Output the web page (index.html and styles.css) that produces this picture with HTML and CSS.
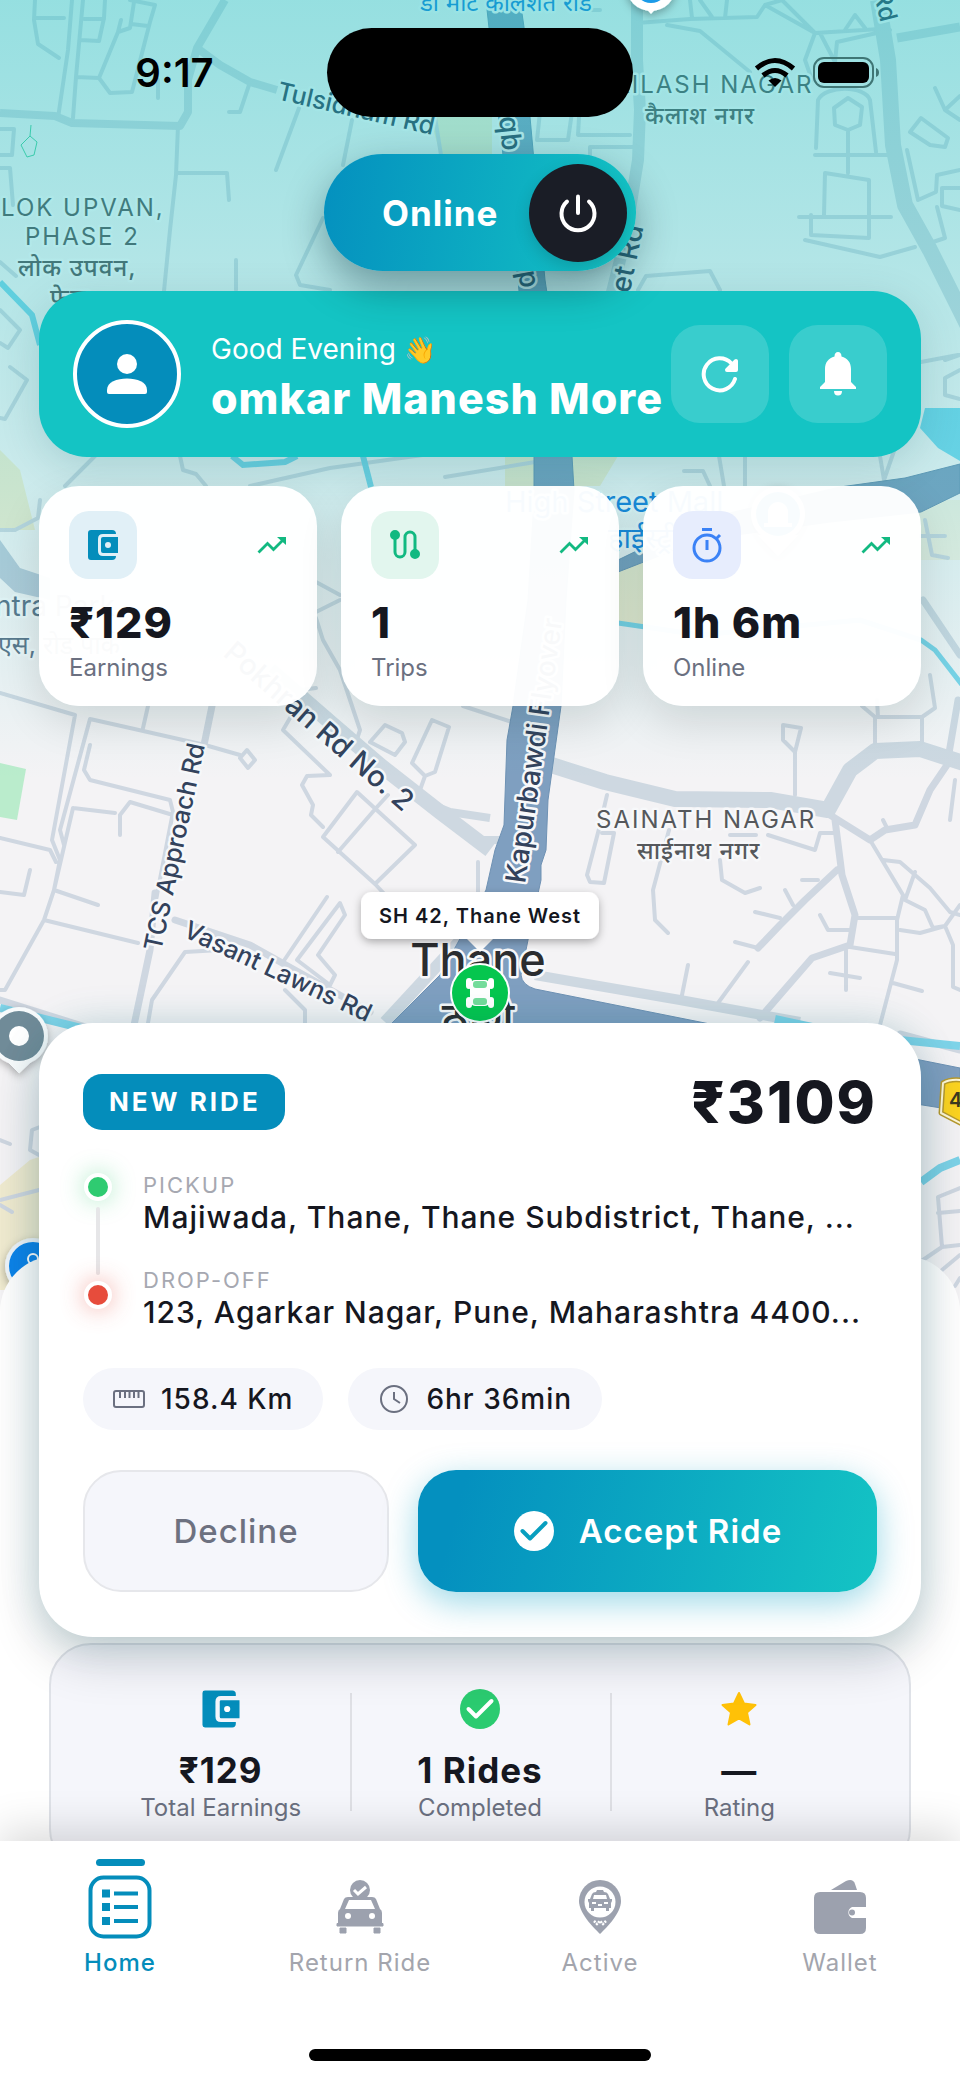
FILE: index.html
```html
<!DOCTYPE html>
<html lang="en">
<head>
  <meta charset="UTF-8">
  <meta name="viewport" content="width=device-width, initial-scale=1.0">
  <title>Driver Home</title>
  <link rel="stylesheet" href="styles.css">
</head>
<body>
  <div class="screen">

    <!-- Map -->
    <svg class="map" viewBox="0 0 960 1400" preserveAspectRatio="xMidYMin slice" role="img" aria-label="Map of Thane West">
      <defs>
        <linearGradient id="tint" x1="0" y1="0" x2="0" y2="1">
          <stop offset="0" stop-color="#14c4c4" stop-opacity="0.42"/>
          <stop offset="0.4" stop-color="#14c4c4" stop-opacity="0.27"/>
          <stop offset="0.62" stop-color="#14c4c4" stop-opacity="0.18"/>
          <stop offset="1" stop-color="#14c4c4" stop-opacity="0"/>
        </linearGradient>
        <filter id="pinShadow" x="-30%" y="-30%" width="160%" height="170%">
          <feDropShadow dx="0" dy="3" stdDeviation="4" flood-opacity="0.3"/>
        </filter>
      </defs>
      <rect width="960" height="1400" fill="#f4f3f5"/>

      <!-- areas -->
      <path class="park" d="M0 763 26 769 17 820 0 817Z"/>
      <path class="tan" d="M430 117 492 117 492 154 440 154ZM505 456H618L600 486H505ZM610 565 660 545 660 625H610ZM0 1185 30 1160 60 1150V1290H0ZM0 450 20 470 35 530H0Z"/>
      <path class="tan" d="M900 500H960V560H900Z" opacity="0.5"/>
      <path class="water" d="M925 408H960V461L938 448 920 428Z"/>
      <path d="M0 540 20 568 50 578V600L15 592 0 578Z" fill="#bccbda"/>

      <!-- lanes -->
      <g class="lane">
        <path d="M35 0 34 20 38 44 59 58M34 18H64M72 0 68 50 58 118M83 0 76 77 73 118M105 0 104 18 99 41 80 40M84 19H104M130 0 155 5 150 22 132 92 110 93 99 78 76 77M99 78 118 32 121 20M118 32 130 28 134 2M131 24 148 26M158 80V98"/>
        <path d="M178 126 176 175 170 230 164 291M176 173H227L229 200M250 82 240 112H229M299 108 276 170M352 120 343 165M435 117 441 155M323 218 296 275 300 285 330 290M236 260V290M0 129H14L12 155H0M0 168H10L13 205M0 262 16 276"/>
        <path d="M637 23 690 19 757 17 765 5 782 0M690 0 692 18M727 0 725 18M700 0 712 17M765 5 815 33 880 29M815 33 800 18 782 0M815 33 805 60 812 80M820 33 835 62 837 42 890 30M845 30 855 15 865 28M667 25 700 31 750 72"/>
        <path d="M816 148 818 100C825 85 865 85 870 100L876 152M815 155H888M848 155V130L835 125 834 108 848 98 862 107 860 125 848 130M848 155V173M825 173 869 180V238L811 235V215M825 173 824 215M799 217H891M805 240 880 257 915 247M910 132 921 118 948 138 945 147 930 145ZM935 88 945 110 960 96M945 110 960 120M907 150 918 200 936 192 937 175 960 170M937 207 945 238 930 243M960 188H942V206L960 210"/>
        <path d="M638 290 646 276 710 271 720 290M540 112 537 140H568L572 112M580 100 578 135H630M590 147H635M590 147V165M600 10H575M0 310 20 330 8 348 0 343M10 367 27 380 5 419 0 418"/>
        <path d="M65 486 95 456M180 456 183 470 196 474 206 486M250 486 330 468 530 440M445 477 535 462M0 530 15 530 38 518 40 500M945 360 960 355M921 362 958 355M960 370 945 378V395L960 399M719 456 724 486M745 456V486M684 471H703L710 486M880 456 884 480 895 448M921 536H945M925 520 932 555 948 558M316 582 340 595M316 612 340 600M316 618 323 640 340 670 360 730 355 745M300 690 316 688"/>
        <path d="M0 693 75 715 52 840 60 860 54 890 44 920 5 990H0M148 706 143 728M90 719 60 830 64 845M90 719 130 728 205 745 240 755M247 750 255 760 248 768 240 758ZM90 745 84 770 90 780 170 800 173 812 155 905M73 808 115 813M120 835V815L130 802 173 815M73 808 54 890 98 905M0 838 50 850 56 862M30 870 24 895 0 892M44 920 138 943M148 1023 152 1000 185 952 220 950M285 990 305 1010V1023"/>
        <path d="M290 718 283 730 330 775 307 776 302 785 313 805 311 815 323 827M357 792 415 845 375 884 323 837ZM377 807 338 852M375 884 390 900M377 807 388 795M370 742 385 725 402 733 405 742 395 755ZM432 720 449 727 435 772 425 776 412 763ZM425 776 420 790M340 903 345 915 318 955 335 975 330 985 297 960ZM327 897 283 962M478 862V892M463 706 512 722"/>
        <path d="M795 795V752L783 740V725L801 728 795 752M875 750V717H922V745M862 706 875 717M877 700 878 717M922 717 935 708 930 675M607 795 600 825 587 875 590 882 604 883 614 833H602M669 830 653 890 655 920 668 933M720 860 722 880 745 893 760 888M730 835H756M768 835 815 850 820 833H835"/>
        <path d="M802 880H818M785 890 793 905M755 912 780 918M758 948 735 942M870 840 903 895 897 920V960L880 1025M855 918H897M850 947 895 954M883 860 900 862 930 888 950 912 960 915M915 872 905 900 925 910 933 928 945 926 960 905M900 930 920 933 945 926 953 945V987L960 990M846 950V990M830 973 860 978M820 915 828 930H850M893 983 922 991M688 965 682 995M748 962 718 1003M955 780 950 820M883 820 888 830"/>
        <path d="M0 1140 10 1144M45 1125 32 1130 30 1150 39 1155M0 1200 39 1190M0 1205 12 1212M960 1188 938 1197 942 1247 960 1245M938 1213 960 1211M942 1247 920 1262M960 1255 942 1270M960 1278 955 1286"/>
      </g>
      <g class="lane wide">
        <path d="M212 706 204 745M155 893 150 950 133 1030M175 920 250 945 370 1012M830 815 870 840 885 830 915 825 930 790 947 765 958 700M835 820 842 875 855 915 850 945 812 958 760 1018M837 870 805 900 780 925 758 948M923 600 960 655"/>
        <path d="M0 1000 95 1030M900 1034 960 1050"/>
      </g>

      <!-- roads -->
      <g class="road">
        <path d="M0 113 55 116 72 123 180 126 188 112V80L197 48 225 0M197 48 220 65 250 82 277 90" stroke-width="8"/>
        <path d="M637 0V60L640 110 638 160 625 240 610 300" stroke-width="12"/>
        <path d="M897 38 960 27" stroke-width="9"/>
        <path d="M878 0 888 60 893 145 905 205 930 250 960 310 985 360" stroke-width="16"/>
        <path d="M270 670 330 722 380 765 440 812 490 850" stroke-width="15"/>
        <path d="M420 800 450 812 490 818M535 840 480 840" stroke-width="8"/>
        <path d="M545 763 605 782 675 799 770 800 828 810 850 770 875 751 920 749 970 765" stroke-width="16"/>
        <path d="M535 975 680 1000 800 1022" stroke-width="10"/>
        <path d="M385 1022 470 930" stroke-width="12"/>
      </g>

      <!-- highway -->
      <g class="highway">
        <path d="M486 0H520L524 27 530 117 533 150 545 280 572 456 574 490 566 600 561 706 548 800 546 850 541 865V880L530 930 521 975Q522 985 535 989L710 1024V1060H360L392 1023 440 975 462 935 486 890 495 850 504 825 507 740 513 706 528 600 534 500V456L518 280 500 130Z"/>
        <path d="M960 464 905 478 840 487 700 520 618 560V572L700 540 830 522 921 512 960 493Z"/>
        <path d="M910 1058 960 1068V1111L910 1103Z"/>
      </g>

      <g class="canal">
        <path d="M0 282 32 315 40 345" stroke-width="6"/>
        <path d="M232 456 243 465 285 462 297 456M363 456 371 487" stroke-width="6"/>
        <path d="M618 623 700 635 860 620 921 640 935 650 970 695" stroke-width="5"/>
        <path d="M0 1008 85 1029M775 1019 812 1027M890 1039 960 1046M921 1182 940 1168 960 1160" stroke-width="8"/>
      </g>
      <path d="M31 125 30 136 21 145 27 157 34 155 37 142 30 136" fill="none" stroke="#4fcf9f"/>

      <!-- labels on the map -->
      <g class="place">
        <text x="1" y="216">LOK UPVAN,</text>
        <text x="25" y="245">PHASE 2</text>
        <text class="local" x="18" y="276">लोक उपवन,</text>
        <text class="local" x="50" y="306">फेज</text>
        <text x="595" y="93">KAILASH NAGAR</text>
        <text class="local" x="645" y="124">कैलाश नगर</text>
        <text x="596" y="828">SAINATH NAGAR</text>
        <text class="local" x="637" y="859">साईनाथ नगर</text>
      </g>
      <g class="street">
        <text transform="translate(276 99) rotate(13)" font-size="25">Tulsidham Rd</text>
        <text class="large" transform="translate(222 655) rotate(41)">Pokhran Rd No. 2</text>
        <text class="small" transform="translate(161 952) rotate(-78)">TCS Approach Rd</text>
        <text class="small" transform="translate(182 936) rotate(25)">Vasant Lawns Rd</text>
        <text transform="translate(525 884) rotate(-82)">Kapurbawdi Flyover</text>
        <text transform="translate(499 117) rotate(84)">qb</text>
        <text transform="translate(518 272) rotate(80)">p</text>
        <text transform="translate(626 310) rotate(-78)">eet Rd</text>
        <text class="small" transform="translate(866 -36) rotate(76)">ta Rd</text>
      </g>
      <g class="poi">
        <text x="420" y="11">डॉ मोटे कॉलेशत रोड</text>
        <text class="large" x="505" y="512">High Street Mall</text>
        <text class="large" x="608" y="548">हाईस्ट्रीट</text>
      </g>
      <g class="street soft">
        <text x="-5" y="616">ntra Park</text>
        <text class="small" x="-2" y="654">एस, रोड पार्क</text>
      </g>
      <rect width="960" height="780" fill="url(#tint)"/>

      <!-- pins -->
      <g filter="url(#pinShadow)">
        <path d="M651 14 633 -6H669Z" fill="#fff"/>
        <circle cx="651" cy="-14" r="25" fill="#fff"/>
        <circle cx="651" cy="-14" r="17" fill="#1b9be8"/>
        <path d="M778 556 758 535H798Z" fill="#fff"/>
        <circle cx="778" cy="514" r="27" fill="#fff"/>
        <circle cx="778" cy="514" r="22" fill="#2aa7c9"/>
        <path d="M19 1073 0 1054 -8 1035H47L39 1054Z" fill="#f7fafb" stroke="#f7fafb" stroke-linejoin="round"/>
        <circle cx="19" cy="1036" r="29" fill="#f7fafb"/>
        <circle cx="19" cy="1036" r="25" fill="#6f8b98"/>
        <circle cx="19" cy="1036" r="10" fill="#fff"/>
        <circle cx="33" cy="1266" r="28" fill="#eef4fa"/>
        <circle cx="33" cy="1266" r="24" fill="#0a84ea"/>
      </g>
      <path d="M768 523V512A10 10 0 0 1 788 512V523H792V527H764V523Z" fill="#fff"/>
      <circle cx="33" cy="1259" r="5" fill="none" stroke="#fff" stroke-width="2"/>
      <path d="M943 1083Q950 1079 960 1080H990V1124H962L941 1113Z" fill="#fcd421" stroke="#b79a2f" stroke-width="5" stroke-linejoin="round"/>
      <path d="M943 1083Q950 1079 960 1080H990V1124H962L941 1113Z" fill="none" stroke="#fff8d8" stroke-width="2" stroke-linejoin="round"/>
      <text x="949" y="1107" class="shield">42</text>

      <!-- current position -->
      <g class="city">
        <text x="478" y="976" text-anchor="middle">Thane</text>
        <text x="478" y="1034" text-anchor="middle">ठाणे</text>
      </g>
      <path d="M466 938H494L480 952Z" fill="#fff"/>
      <rect x="361" y="892" width="238" height="47" rx="11" fill="#fff" filter="url(#pinShadow)"/>
      <text x="480" y="923" text-anchor="middle" class="bubble">SH 42, Thane West</text>
      <circle cx="480" cy="993" r="30" fill="#fff"/>
      <circle cx="480" cy="993" r="28" fill="#05c64e"/>
      <rect x="470" y="980" width="20" height="26" rx="5" fill="#fff"/>
      <rect x="473" y="981" width="14" height="7" rx="3" fill="#74dc9b"/>
      <rect x="473" y="998" width="14" height="7" rx="3" fill="#74dc9b"/>
      <path d="M469 981V986M491 981V986M469 1000V1005M491 1000V1005" stroke="#fff" stroke-width="6" stroke-linecap="round"/>
    </svg>

    <!-- Status bar -->
    <div class="status-bar">
      <time class="clock">9:17</time>
      <div class="island"></div>
      <div class="status-icons">
        <svg width="42" height="32" viewBox="0 0 42 32" fill="none" stroke="#000" stroke-width="5">
          <path d="M2.500 11.500Q21 -4.500 39.500 11.500"/>
          <path d="M9 18.500Q21 8.500 33 18.500"/>
          <path d="M21 30 14.500 23.500Q21 18.500 27.500 23.500Z" fill="#000" stroke="none"/>
        </svg>
        <svg width="68" height="32" viewBox="0 0 68 32">
          <rect x="1" y="1" width="59" height="29" rx="10" fill="none" stroke="#3f7675" stroke-width="2"/>
          <rect x="5" y="5" width="51" height="21" rx="6" fill="#000"/>
          <path d="M63 11Q66 12 66 15.500Q66 19 63 20Z" fill="#3f7675"/>
        </svg>
      </div>
    </div>

    <button class="toggle" type="button" aria-pressed="true">
      <span class="toggle-label">Online</span>
      <span class="knob">
        <svg width="40" height="40" viewBox="0 0 40 40" fill="none" stroke="#fff" stroke-width="4" stroke-linecap="round">
          <path d="M20 3.500V20"/>
          <path d="M9 8.500A16.500 16.500 0 1 0 31 8.500"/>
        </svg>
      </span>
    </button>

    <!-- Greeting -->
    <header class="profile">
      <div class="avatar">
        <svg width="42" height="42" viewBox="0 0 42 42" fill="#fff">
          <circle cx="21" cy="11" r="10"/>
          <path d="M1 37C1 29 11 25.500 21 25.500S41 29 41 37V39Q41 41 39 41H3Q1 41 1 39Z"/>
        </svg>
      </div>
      <div class="greeting">
        <p>Good Evening <span class="wave">👋</span></p>
        <h1>omkar Manesh More</h1>
      </div>
      <div class="profile-actions">
        <button type="button" aria-label="Refresh">
          <svg width="40" height="40" viewBox="0 0 40 40" fill="none" stroke="#fff" stroke-width="4" stroke-linecap="round">
            <path d="M35 25A16 16 0 1 1 31.500 9.500"/>
            <path d="M36 7V16H27Z" fill="#fff" stroke-linejoin="round"/>
          </svg>
        </button>
        <button type="button" aria-label="Notifications">
          <svg width="40" height="46" viewBox="0 0 40 46" fill="#fff">
            <path d="M20 1C17.800 1 16.500 2.500 16.500 5.500C10.500 7 7 11.500 7 18V31L2 36V38H38V36L33 31V18C33 11.500 29.500 7 23.500 5.500C23.500 2.500 22.200 1 20 1Z"/>
            <path d="M16 40H24Q24 44.500 20 44.500T16 40Z"/>
          </svg>
        </button>
      </div>
    </header>

    <!-- Today stats -->
    <section class="stats">
      <article class="stat">
        <div class="stat-top">
          <span class="stat-icon blue">
            <svg width="34" height="34" viewBox="0 0 34 34">
              <path d="M5 2H26Q30 2 30 6H17Q12 6 12 11V23Q12 28 17 28H30Q30 32 26 32H5Q2 32 2 29V5Q2 2 5 2Z" fill="#048dbb"/>
              <path d="M17 9H32V25H17Q15 25 15 23V11Q15 9 17 9Z" fill="#048dbb"/>
              <circle cx="22" cy="17" r="3" fill="#e1f0f7"/>
            </svg>
          </span>
          <svg class="trend" width="30" height="18" viewBox="0 0 30 18"><path d="M1.500 16.500 10.500 7.500 16.500 13.500 26 4" fill="none" stroke="#12b981" stroke-width="2.800"/><path d="M20 1H29V9Z" fill="#12b981"/></svg>
        </div>
        <strong>₹129</strong>
        <span class="stat-label">Earnings</span>
      </article>
      <article class="stat">
        <div class="stat-top">
          <span class="stat-icon green">
            <svg width="34" height="34" viewBox="0 0 34 34" fill="none" stroke="#12b981" stroke-width="3">
              <path d="M7 7V24A5 5 0 0 0 17 24V9A5 5 0 0 1 27 9V26"/>
              <circle cx="7" cy="7" r="3.500" fill="#12b981"/>
              <circle cx="27" cy="26" r="3.500" fill="#12b981"/>
            </svg>
          </span>
          <svg class="trend" width="30" height="18" viewBox="0 0 30 18"><path d="M1.500 16.500 10.500 7.500 16.500 13.500 26 4" fill="none" stroke="#12b981" stroke-width="2.800"/><path d="M20 1H29V9Z" fill="#12b981"/></svg>
        </div>
        <strong>1</strong>
        <span class="stat-label">Trips</span>
      </article>
      <article class="stat">
        <div class="stat-top">
          <span class="stat-icon indigo">
            <svg width="34" height="36" viewBox="0 0 34 36" fill="none" stroke="#3b82f6" stroke-width="3">
              <path d="M12 2.500H22"/>
              <circle cx="17" cy="21" r="13"/>
              <path d="M17 13V23M26 12 30 8"/>
            </svg>
          </span>
          <svg class="trend" width="30" height="18" viewBox="0 0 30 18"><path d="M1.500 16.500 10.500 7.500 16.500 13.500 26 4" fill="none" stroke="#12b981" stroke-width="2.800"/><path d="M20 1H29V9Z" fill="#12b981"/></svg>
        </div>
        <strong>1h 6m</strong>
        <span class="stat-label">Online</span>
      </article>
    </section>

    <!-- Ride request over the bottom sheet -->
    <div class="dock">
      <div class="sheet"></div>

      <section class="ride">
        <div class="ride-head">
          <span class="badge">NEW RIDE</span>
          <strong class="fare">₹3109</strong>
        </div>
        <div class="route">
          <div class="route-line">
            <i class="dot pickup"></i>
            <i class="bar"></i>
            <i class="dot drop"></i>
          </div>
          <dl>
            <div>
              <dt>PICKUP</dt>
              <dd>Majiwada, Thane, Thane Subdistrict, Thane, ...</dd>
            </div>
            <div>
              <dt>DROP-OFF</dt>
              <dd>123, Agarkar Nagar, Pune, Maharashtra 4400...</dd>
            </div>
          </dl>
        </div>
        <div class="chips">
          <span class="chip">
            <svg width="32" height="32" viewBox="0 0 32 32" fill="none" stroke="#6b7080" stroke-width="2">
              <rect x="1" y="8" width="30" height="16" rx="2"/>
              <path d="M7 8V15M12 8V15M16.500 8V15M21 8V15M25.500 8V15"/>
            </svg>
            158.4 Km
          </span>
          <span class="chip">
            <svg width="32" height="32" viewBox="0 0 32 32" fill="none" stroke="#6b7080" stroke-width="2">
              <circle cx="16" cy="16" r="13"/>
              <path d="M16 9V16L22 20"/>
            </svg>
            6hr 36min
          </span>
        </div>
        <div class="ride-actions">
          <button class="decline" type="button">Decline</button>
          <button class="accept" type="button">
            <svg width="42" height="42" viewBox="0 0 42 42" fill="none">
              <circle cx="21" cy="21" r="20" fill="#fff"/>
              <path d="M9.500 21 17 28.500 32.500 13" stroke="#089fbf" stroke-width="4" stroke-linecap="round" stroke-linejoin="round"/>
            </svg>
            Accept Ride
          </button>
        </div>
      </section>

      <section class="summary">
        <div class="summary-item">
          <svg width="42" height="42" viewBox="0 0 34 34">
            <path d="M4 2H26Q29 2 29 5V6.500H17Q12.500 6.500 12.500 11V23Q12.500 27.500 17 27.500H29V29Q29 32 26 32H4Q2 32 2 30V4Q2 2 4 2Z" fill="#048dbb"/>
            <path d="M17 10H32V24.500H17Q16 24.500 16 23V11Q16 10 17 10Z" fill="#048dbb"/>
            <circle cx="22" cy="17" r="2.500" fill="#fff"/>
          </svg>
          <strong>₹129</strong>
          <span>Total Earnings</span>
        </div>
        <div class="summary-item">
          <svg width="42" height="42" viewBox="0 0 42 42" fill="none">
            <circle cx="21" cy="21" r="20" fill="#2bcb70"/>
            <path d="M9.500 21 17 28.500 32.500 13" stroke="#fff" stroke-width="4" stroke-linecap="round" stroke-linejoin="round"/>
          </svg>
          <strong>1 Rides</strong>
          <span>Completed</span>
        </div>
        <div class="summary-item">
          <svg width="42" height="42" viewBox="0 0 42 42">
            <path d="M21 5 26 15.500 37.500 17 29 24.500 31.500 36.500 21 30.500 10.500 36.500 13 24.500 4.500 17 16 15.500Z" fill="#ffc107" stroke="#ffc107" stroke-width="2" stroke-linejoin="round"/>
          </svg>
          <strong>—</strong>
          <span>Rating</span>
        </div>
      </section>
    </div>

    <!-- Tab bar -->
    <nav class="tabs">
      <div class="tab-row">
        <a href="#home" class="tab active">
          <svg width="64" height="64" viewBox="0 0 64 64" fill="none" stroke="#048dbb" stroke-width="4">
            <rect x="2.500" y="2.500" width="59" height="59" rx="13"/>
            <path d="M26 18.500H50M26 32H50M26 46H50"/>
            <path d="M14 14.500H22V22.500H14ZM14 28H22V36H14ZM14 42H22V50H14Z" fill="#048dbb" stroke="none"/>
          </svg>
          <span>Home</span>
        </a>
        <a href="#return" class="tab">
          <svg width="64" height="64" viewBox="0 0 64 64">
            <circle cx="32" cy="15" r="10" fill="#9ca1ae"/>
            <path d="M26 15 30 19 38 12" fill="none" stroke="#fff" stroke-width="3"/>
            <path d="M20 22H44Q47 22 48 24L52 34Q54 35 54 38V48H10V38Q10 35 12 34L16 24Q17 22 20 22ZM21 25 17 34H47L43 25Z" fill="#9ca1ae" fill-rule="evenodd"/>
            <path d="M9 48.500H55V51H9ZM12 53H18V58H12ZM46 53H52V58H46Z" fill="#9ca1ae" stroke="#9ca1ae"/>
            <circle cx="20" cy="41" r="3" fill="#fff"/>
            <circle cx="44" cy="41" r="3" fill="#fff"/>
          </svg>
          <span>Return Ride</span>
        </a>
        <a href="#active" class="tab">
          <svg width="64" height="64" viewBox="0 0 64 64">
            <path d="M32 59C24 51 11 38 11 26A21 21 0 0 1 53 26C53 38 40 51 32 59Z" fill="#9ca1ae"/>
            <circle cx="32" cy="27" r="15.500" fill="#fff"/>
            <path d="M29 15H35L36 17Q39 17 40 19L42 24H44V26L43 28V33H41V36H38V33H26V36H23V33H21V28L20 26V24H22L24 19Q25 17 28 17ZM26 20 25 24H39L38 20Z" fill="#9ca1ae" fill-rule="evenodd"/>
            <path d="M24 28H28M30 30H34M36 28H40" stroke="#fff" stroke-width="2"/>
            <path d="M26 46 29 49 32 46 35 49 38 46" stroke="#fff" stroke-width="2.500" stroke-dasharray="2 1" fill="none"/>
          </svg>
          <span>Active</span>
        </a>
        <a href="#wallet" class="tab">
          <svg width="64" height="64" viewBox="0 0 64 64" fill="#9ca1ae">
            <path d="M23 15 38 6Q45 3 47 9L49 15Z"/>
            <path d="M12 17H52Q58 17 58 23V32H44A6 6 0 0 0 44 43H58V53Q58 59 52 59H12Q6 59 6 53V23Q6 17 12 17Z"/>
            <circle cx="44" cy="37.500" r="3"/>
          </svg>
          <span>Wallet</span>
        </a>
      </div>
      <div class="home-indicator"></div>
    </nav>
  </div>
</body>
</html>
```
FILE: styles.css
```css
:root {
  --primary: #048dbb;
  --teal: #14c4c4;
  --ink: #15171f;
  --muted: #6b7080;
  --faint: #9ca1ae;
  --surface: #f5f6fb;
}

* {
  margin: 0;
  padding: 0;
  box-sizing: border-box;
}

body {
  font-family: Inter, "Noto Sans", "Liberation Sans", sans-serif;
  color: var(--ink);
  background: #fff;
}

button {
  border: none;
  font: inherit;
  letter-spacing: inherit;
  cursor: pointer;
}

svg {
  display: block;
  flex: none;
}

.screen {
  position: relative;
  min-height: 100vh;
  display: flex;
  flex-direction: column;
  overflow: hidden;
}

/* Map */
.map {
  position: absolute;
  top: 0;
  left: 0;
  width: 100%;
  z-index: 0;
}

.map text {
  paint-order: stroke;
  stroke: #f7f8fa;
  stroke-width: 5px;
  stroke-linejoin: round;
}

.park { fill: #baeccc; }
.tan { fill: #f0ebd0; }
.water { fill: #7ad5ec; }

.lane {
  fill: none;
  stroke: #cfd7e1;
  stroke-width: 4;
  stroke-linecap: round;
  stroke-linejoin: round;
}

.lane.wide { stroke-width: 7; }

.road {
  fill: none;
  stroke: #ced8e1;
  stroke-linejoin: round;
}

.highway {
  fill: #7f9fc0;
  stroke: #6f92b4;
  stroke-width: 1;
}

.canal {
  fill: none;
  stroke: #7dd3e8;
}

.place {
  font-size: 24px;
  letter-spacing: 2px;
  fill: #55585c;
}

.place .local {
  font-weight: 500;
  letter-spacing: 1px;
}

.street {
  font-size: 28px;
  font-weight: 500;
  fill: #33425c;
}

.map .small { font-size: 25px; }
.map .large { font-size: 29px; }

.street.soft {
  font-weight: 400;
  fill: #5e7288;
}

.poi {
  font-size: 24px;
  fill: #1a80dc;
}

.city {
  font-size: 45px;
  font-weight: 500;
  fill: #2b2d30;
}

.map .shield {
  font-size: 20px;
  font-weight: 600;
  fill: #3d3a20;
  stroke: none;
}

.map .bubble {
  font-size: 20px;
  font-weight: 600;
  fill: #15171f;
  letter-spacing: 1px;
  stroke: none;
}

/* Status bar */
.status-bar {
  position: relative;
  display: grid;
  grid-template-columns: 1fr 306px 1fr;
  align-items: center;
  padding-top: 28px;
}

.clock {
  text-align: center;
  padding-left: 22px;
  font-size: 40px;
  font-weight: 600;
  color: #000;
}

.island {
  height: 89px;
  border-radius: 45px;
  background: #000;
}

.status-icons {
  display: flex;
  justify-content: center;
  align-items: center;
  gap: 17px;
  padding-left: 42px;
}

/* Online toggle */
.toggle {
  position: relative;
  align-self: center;
  display: flex;
  align-items: center;
  justify-content: space-between;
  width: 312px;
  height: 117px;
  margin-top: 37px;
  padding: 0 9px 0 58px;
  border-radius: 59px;
  background: linear-gradient(100deg, #0490bf, var(--teal));
  box-shadow: 0 16px 40px rgba(0, 40, 50, 0.4);
  z-index: 2;
}

.toggle-label {
  font-size: 35px;
  font-weight: 700;
  letter-spacing: 1px;
  color: #fff;
}

.knob {
  display: flex;
  align-items: center;
  justify-content: center;
  width: 98px;
  height: 98px;
  border-radius: 50%;
  background: #1a1d26;
  box-shadow: 0 6px 16px rgba(0, 0, 0, 0.15);
}

/* Greeting */
.profile {
  position: relative;
  display: flex;
  align-items: center;
  margin: 20px 39px 0;
  padding: 29px 34px;
  border-radius: 48px;
  background: var(--teal);
  box-shadow: 0 10px 40px rgba(0, 80, 90, 0.16);
}

.avatar {
  display: flex;
  align-items: center;
  justify-content: center;
  flex: none;
  width: 108px;
  height: 108px;
  border: 4px solid #fff;
  border-radius: 50%;
  background: var(--primary);
}

.greeting {
  flex: 1;
  min-width: 0;
  padding: 6px 0 0 30px;
  color: #fff;
  white-space: nowrap;
}

.greeting p {
  font-size: 28px;
  line-height: 40px;
}

.wave {
  font-size: 26px;
}

.greeting h1 {
  font-size: 43px;
  line-height: 56px;
  font-weight: 800;
  letter-spacing: 1px;
}

.profile-actions {
  display: flex;
  gap: 20px;
}

.profile-actions button {
  display: flex;
  align-items: center;
  justify-content: center;
  width: 98px;
  height: 98px;
  border-radius: 29px;
  background: rgba(255, 255, 255, 0.16);
}

/* Stats */
.stats {
  position: relative;
  display: grid;
  grid-template-columns: repeat(3, 1fr);
  gap: 24px;
  margin: 29px 39px 0;
}

.stat {
  display: flex;
  flex-direction: column;
  padding: 25px 30px 22px;
  border-radius: 40px;
  background: rgba(255, 255, 255, 0.97);
  box-shadow: 0 16px 44px rgba(0, 20, 20, 0.12);
}

.stat-top {
  display: flex;
  align-items: center;
  justify-content: space-between;
}

.stat-icon {
  display: flex;
  align-items: center;
  justify-content: center;
  width: 68px;
  height: 68px;
  border-radius: 20px;
}

.stat-icon.blue { background: #e1f0f7; }
.stat-icon.green { background: #e2f6ee; }
.stat-icon.indigo { background: #e7edfd; }

.stat strong {
  margin-top: 18px;
  font-size: 43px;
  line-height: 50px;
  font-weight: 800;
  letter-spacing: 1px;
}

.stat-label {
  margin-top: 5px;
  font-size: 24px;
  line-height: 32px;
  color: var(--muted);
}

/* Bottom dock */
.dock {
  position: relative;
  margin-top: auto;
}

.sheet {
  position: absolute;
  top: 233px;
  left: 0;
  right: 0;
  bottom: 0;
  border-radius: 56px 56px 0 0;
  background: #fff;
}

.ride {
  position: relative;
  margin: 0 39px;
  padding: 51px 44px 45px;
  border-radius: 54px;
  background: #fff;
  box-shadow: 0 20px 50px rgba(0, 20, 30, 0.2), 0 0 40px rgba(4, 141, 160, 0.16);
  z-index: 1;
}

.ride-head {
  display: flex;
  align-items: center;
  justify-content: space-between;
  height: 56px;
}

.badge {
  padding: 0 24px 0 26px;
  border-radius: 19px;
  background: var(--primary);
  color: #fff;
  font-size: 26px;
  font-weight: 700;
  line-height: 56px;
  letter-spacing: 3px;
}

.fare {
  font-size: 58px;
  font-weight: 800;
  line-height: 56px;
  letter-spacing: 2px;
}

.route {
  display: flex;
  gap: 30px;
  margin-top: 41px;
}

.route-line {
  display: flex;
  flex-direction: column;
  align-items: center;
  width: 30px;
  padding-top: 2px;
}

.dot {
  width: 28px;
  height: 28px;
  border: 4px solid #fff;
  border-radius: 50%;
}

.dot.pickup {
  background: #2fcb71;
  box-shadow: 0 0 24px rgba(47, 203, 113, 0.4);
}

.dot.drop {
  background: #e74c3c;
  box-shadow: 0 0 24px rgba(231, 76, 60, 0.45);
}

.bar {
  width: 4px;
  height: 68px;
  margin: 6px 0;
  border-radius: 2px;
  background: #e6e6e8;
}

.route dl {
  flex: 1;
  min-width: 0;
}

.route dl > div {
  height: 95px;
}

.route dt {
  font-size: 22px;
  line-height: 28px;
  letter-spacing: 2px;
  color: #a6a8b1;
}

.route dd {
  font-size: 30px;
  line-height: 36px;
  font-weight: 500;
  letter-spacing: 1px;
  white-space: nowrap;
}

.chips {
  display: flex;
  gap: 25px;
  margin-top: 7px;
}

.chip {
  display: flex;
  align-items: center;
  gap: 16px;
  height: 62px;
  padding: 0 30px;
  border-radius: 31px;
  background: var(--surface);
  font-size: 28px;
  font-weight: 500;
  letter-spacing: 1px;
}

.ride-actions {
  display: grid;
  grid-template-columns: 2fr 3fr;
  gap: 29px;
  margin-top: 40px;
}

.ride-actions button {
  display: flex;
  align-items: center;
  justify-content: center;
  gap: 24px;
  height: 122px;
  border-radius: 38px;
  font-size: 33px;
  font-weight: 600;
  letter-spacing: 1px;
}

.ride-actions .decline {
  border: 2px solid #e6e7eb;
  background: var(--surface);
  color: #6d7180;
  font-weight: 500;
}

.ride-actions .accept {
  background: linear-gradient(105deg, #0490bf 10%, var(--teal));
  color: #fff;
  box-shadow: 0 10px 34px rgba(4, 157, 195, 0.4);
}

.summary {
  position: relative;
  display: grid;
  grid-template-columns: repeat(3, 1fr);
  margin: 6px 49px -30px;
  padding: 43px 40px;
  border: 2px solid #dfe2e8;
  border-radius: 42px;
  background: var(--surface);
}

.summary-item {
  display: flex;
  flex-direction: column;
  align-items: center;
}

.summary-item + .summary-item {
  background: linear-gradient(#dfe0e5, #dfe0e5) left 5px / 2px 118px no-repeat;
}

.summary-item strong {
  margin-top: 20px;
  font-size: 35px;
  line-height: 40px;
  font-weight: 700;
  letter-spacing: 1px;
}

.summary-item span {
  font-size: 24px;
  line-height: 36px;
  color: var(--muted);
}

/* Tab bar */
.tabs {
  position: relative;
  padding: 34px 0 20px;
  background: #fff;
  box-shadow: 0 -10px 40px rgba(0, 0, 0, 0.15);
  z-index: 2;
}

.tab-row {
  display: grid;
  grid-template-columns: repeat(4, 1fr);
}

.tab {
  position: relative;
  display: flex;
  flex-direction: column;
  align-items: center;
  gap: 6px;
  color: #a3a5ad;
  font-size: 24px;
  line-height: 36px;
  letter-spacing: 1px;
  text-decoration: none;
}

.tab.active {
  color: var(--primary);
  font-weight: 500;
}

.tab.active::before {
  content: "";
  position: absolute;
  top: -16px;
  width: 49px;
  height: 7px;
  border-radius: 4px;
  background: var(--primary);
}

.home-indicator {
  width: 342px;
  height: 12px;
  margin: 68px auto 0;
  border-radius: 6px;
  background: #000;
}
```
